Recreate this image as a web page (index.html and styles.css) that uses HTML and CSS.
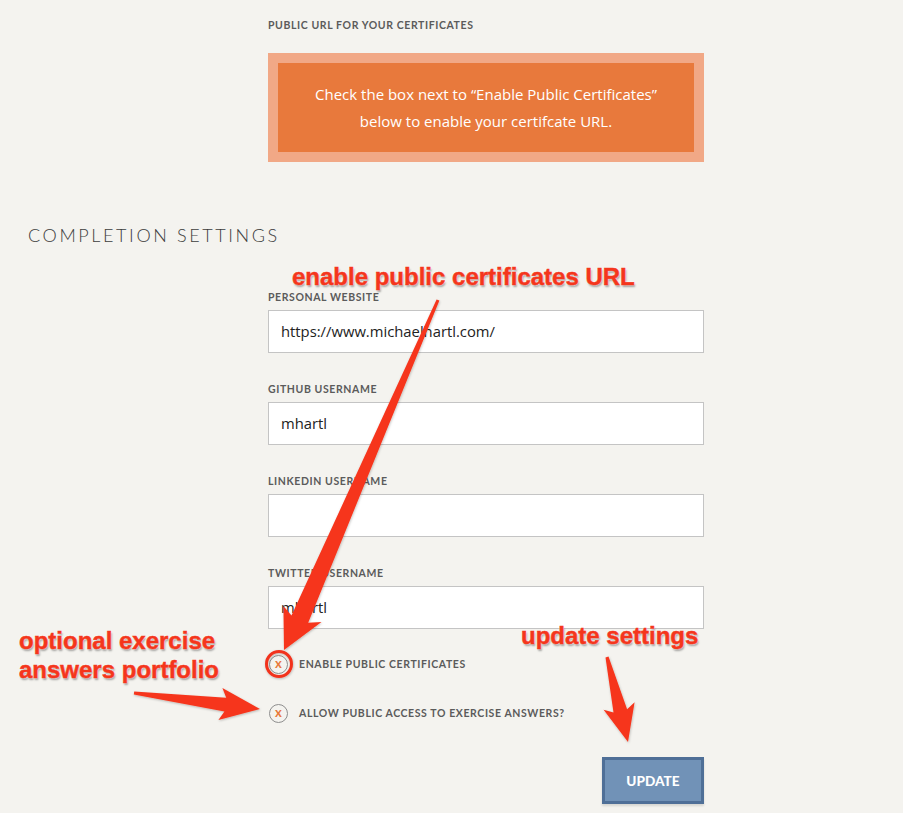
FILE: index.html
```html
<!DOCTYPE html>
<html lang="en">
<head>
<meta charset="utf-8">
<title>Completion Settings</title>
<link rel="stylesheet" href="styles.css">
</head>
<body>
<div class="page">
  <div class="column top-block">
    <div class="label">Public URL for your certificates</div>
    <div class="banner">
      <div class="banner-inner">Check the box next to “Enable Public Certificates”<br>below to enable your certifcate URL.</div>
    </div>
  </div>

  <h2 class="section-title">Completion Settings</h2>

  <form class="column form">
    <div class="field">
      <div class="label">Personal website</div>
      <div class="input">https://www.michaelhartl.com/</div>
    </div>
    <div class="field">
      <div class="label">Github username</div>
      <div class="input">mhartl</div>
    </div>
    <div class="field">
      <div class="label">Linkedin username</div>
      <div class="input"></div>
    </div>
    <div class="field">
      <div class="label">Twitter username</div>
      <div class="input">mhartl</div>
    </div>

    <div class="check-row first">
      <span class="check"><span class="x">x</span></span>
      <span class="check-label">Enable public certificates</span>
    </div>
    <div class="check-row">
      <span class="check"><span class="x">x</span></span>
      <span class="check-label">Allow public access to exercise answers?</span>
    </div>

    <div class="actions">
      <div class="button">Update</div>
    </div>
  </form>

  <svg class="overlay" width="903" height="813" viewBox="0 0 903 813" aria-hidden="true">
    <defs>
      <filter id="sh" x="-20%" y="-20%" width="140%" height="140%">
        <feDropShadow dx="0.5" dy="1" stdDeviation="0.8" flood-color="#000" flood-opacity="0.25"/>
      </filter>
    </defs>
    <circle cx="279" cy="664" r="12.5" fill="none" stroke="#f2321c" stroke-width="3" filter="url(#sh)"/>
    <g fill="#f6361d" filter="url(#sh)">
      <polygon points="439.4,300.6 308.2,622.8 321.5,622.1 284,650 283.4,606 291.5,615.6 436.6,299.4"/>
      <polygon points="133.8,694.5 224.4,711.5 218.4,719.9 260,709 222.4,688.1 226.2,697.7 134.2,691.5"/>
      <polygon points="608.5,656.6 627.1,709.2 634.6,702.2 628,742 603.6,709.8 613.5,712.6 605.5,657.4"/>
    </g>
  </svg>
  <div class="note note-url">enable public certificates URL</div>
  <div class="note note-portfolio">optional exercise<br>answers portfolio</div>
  <div class="note note-update">update settings</div>
</div>
</body>
</html>
```

FILE: styles.css
```css
html, body {
  margin: 0;
  padding: 0;
  background: #f4f3ef;
}

body {
  font-family: Lato, "Open Sans", "Liberation Sans", sans-serif;
  color: #555;
}

.page {
  position: relative;
  width: 903px;
  height: 813px;
  overflow: hidden;
}

.column {
  margin-left: 268px;
  width: 436px;
}

.top-block {
  padding-top: 18px;
}

.label {
  font-size: 10.5px;
  line-height: 14px;
  text-transform: uppercase;
  letter-spacing: 0.6px;
  color: #5b5b5b;
  font-weight: 700;
}

.banner {
  margin-top: 21px;
  background: #f1a886;
  padding: 10px;
}

.banner-inner {
  background: #e8793c;
  color: #fff;
  text-align: center;
  font-family: "Open Sans", Lato, sans-serif;
  font-size: 15px;
  line-height: 27px;
  padding: 17.5px 0;
}

.section-title {
  margin: 62px 0 0 28px;
  font-size: 18px;
  line-height: 22px;
  font-weight: 300;
  letter-spacing: 2.6px;
  text-transform: uppercase;
  color: #3d3d3d;
}

.form {
  display: flex;
  flex-direction: column;
  margin-top: 44px;
}

.field + .field {
  margin-top: 29px;
}

.field .input {
  margin-top: 6px;
  height: 41px;
  border: 1px solid #c4c4c4;
  background: #fff;
  box-sizing: content-box;
  padding: 0 12px;
  font-family: "Open Sans", Lato, sans-serif;
  font-size: 14.8px;
  line-height: 41px;
  color: #222;
}

.check-row {
  display: flex;
  align-items: center;
  height: 20px;
  margin-top: 29px;
}

.check-row.first {
  margin-top: 25px;
}

.check {
  width: 17px;
  height: 17px;
  border: 1.5px solid #8e8e8e;
  border-radius: 50%;
  margin-left: 1px;
  margin-right: 11px;
  display: flex;
  align-items: center;
  justify-content: center;
  background: #f4f3ef;
}

.check .x {
  color: #e8793c;
  font-weight: 700;
  font-size: 13px;
  line-height: 13px;
  margin-top: -2px;
}

.check-label {
  font-size: 10.5px;
  text-transform: uppercase;
  letter-spacing: 0.6px;
  color: #5b5b5b;
  font-weight: 700;
}

.actions {
  display: flex;
  justify-content: flex-end;
  margin-top: 34px;
}

.button {
  width: 96px;
  height: 41px;
  border: 3px solid #4f6f97;
  background: #7192b7;
  color: #fff;
  font-weight: 900;
  font-size: 13.6px;
  display: flex;
  align-items: center;
  justify-content: center;
  text-transform: uppercase;
  box-shadow: 0 2px 2px rgba(0, 0, 0, 0.12);
}

.overlay {
  position: absolute;
  left: 0;
  top: 0;
}

.note {
  position: absolute;
  font-family: "Liberation Sans", Arial, sans-serif;
  font-weight: 700;
  font-size: 24px;
  line-height: 29px;
  color: #f4361c;
  white-space: nowrap;
  -webkit-text-stroke: 0.5px #f4361c;
  text-shadow: 0 0 1px #fff, 0 0 2px #fff, 1px 1.5px 2px rgba(0, 0, 0, 0.35);
}

.note-url {
  left: 292px;
  top: 262px;
}

.note-portfolio {
  left: 19px;
  top: 626px;
}

.note-update {
  left: 521px;
  top: 621px;
}
```
